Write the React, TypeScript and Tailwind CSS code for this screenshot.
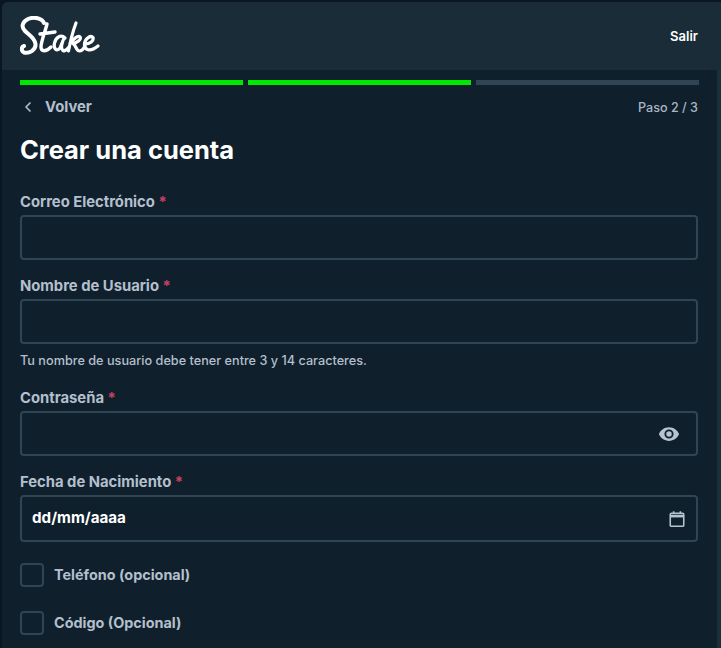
import React from 'react';
import { ChevronLeft } from 'lucide-react';

const font = { fontFamily: 'Inter' };

const StakeLogo = () => (
  <svg width="80" height="40" viewBox="0 0 80 40" fill="none" stroke="white" strokeLinecap="round" strokeLinejoin="round">
    {/* S */}
    <path d="M24 7 C22 2 14 0.5 8 3 C2 6 1 11 5 15 C9 19 15 22 15.500 28 C16 34 9 38 4 36.500 C1 35 1 31 4 30" strokeWidth="4" />
    {/* t */}
    <path d="M27 8 C25 16 21 26 21 31 C21 36 26 36 31 31 M20 18 L35 16" strokeWidth="3.400" />
    {/* a */}
    <path d="M45 22 C41 18 36 21 34.500 27 C33 33 37 36 40 32 L44 22 C42 27 41 31 42 33 C43 36 46 35 49 31" strokeWidth="3.200" />
    {/* k */}
    <path d="M56 7 C53 15 50 27 48.500 35 M50 28 C53 23 58 19 60 21 C62 23 57 27 53 27.500 C56 29 56 35 59.500 35 C62 35 64 32 65 30" strokeWidth="3.200" />
    {/* e */}
    <path d="M65 28 C70 28 74 25 73 21.500 C71 19 65 22 64.500 28 C64 34 70 36.500 78 30" strokeWidth="3.200" />
  </svg>
);

const Label = ({ text }: { text: string }) => (
  <label className="block pt-[1px] text-[14.8px] leading-[20px] font-bold text-[#b4bfcd]">
    {text} <span className="text-[#c9405f]">*</span>
  </label>
);

const Field = ({ children, tall }: { children?: React.ReactNode; tall?: boolean }) => (
  <div className={`mt-[3px] flex items-center border-2 border-[#2f4553] rounded-[4px] bg-[#0f202c] ${tall ? 'h-[47px]' : 'h-[45px]'}`}>
    {children}
  </div>
);

const Check = ({ text }: { text: string }) => (
  <div className="flex items-center gap-[10px] h-[24px]">
    <div className="w-[24px] h-[24px] border-2 border-[#2f4553] rounded-[4px] bg-[#0f202c]" />
    <span className="text-[14.4px] font-bold text-[#b4bfcd]">{text}</span>
  </div>
);

export default function App() {
  return (
    <div style={font} className="w-[721px] h-[648px] overflow-hidden bg-[#0a1720] pt-[2px] pl-[2px]">
      <div className="h-full bg-[#0f202c] rounded-tl-[6px] overflow-hidden">
        <header className="h-[68px] bg-[#1a2c38] flex items-center justify-between pl-[18px] pr-[23px]">
          <StakeLogo />
          <button className="mt-[1px] text-[13px] font-semibold text-white">Salir</button>
        </header>

        <div className="flex h-[578px]">
          <main className="flex-1 pl-[18px] pr-[19px]">
            <div className="flex gap-[5px] mt-[10px] mr-[-1px]">
              <div className="h-[5px] flex-1 bg-[#00e701]" />
              <div className="h-[5px] flex-1 bg-[#00e701]" />
              <div className="h-[5px] flex-1 bg-[#2f4553]" />
            </div>

            <div className="flex items-center justify-between mt-[12px] h-[20px]">
              <div className="flex items-center text-[#b4bfcd]">
                <ChevronLeft size={16} strokeWidth={2.5} />
                <span className="ml-[9px] text-[14.8px] font-bold">Volver</span>
              </div>
              <span className="mt-[3px] text-[12.6px] font-medium text-[#a9b5c4]">Paso 2 / 3</span>
            </div>

            <h1 className="mt-[17px] text-[25.500px] leading-[32px] font-bold text-white">Crear una cuenta</h1>

            <div className="mt-[25px]">
              <Label text="Correo Electrónico" />
              <Field />
            </div>

            <div className="mt-[15px]">
              <Label text="Nombre de Usuario" />
              <Field />
              <p className="mt-[9px] text-[12.7px] leading-[16px] font-medium text-[#b4bfcd]">
                Tu nombre de usuario debe tener entre 3 y 14 caracteres.
              </p>
            </div>

            <div className="mt-[18px]">
              <Label text="Contraseña" />
              <Field>
                <div className="ml-auto mr-[16px]">
                  <svg width="22" height="22" viewBox="0 0 24 24" fill="#b8c3d0">
                    <path fillRule="evenodd" d="M12 4.500C7 4.500 2.700 7.600 1 12c1.700 4.400 6 7.500 11 7.500s9.300-3.100 11-7.500c-1.700-4.400-6-7.500-11-7.500zm0 12.500a5 5 0 1 1 0-10 5 5 0 0 1 0 10zm0-8a3 3 0 1 0 0 6 3 3 0 0 0 0-6z" />
                  </svg>
                </div>
              </Field>
            </div>

            <div className="mt-[15px]">
              <Label text="Fecha de Nacimiento" />
              <Field tall>
                <span className="ml-[10px] mb-[1px] text-[15.2px] font-bold text-white">dd/mm/aaaa</span>
                <div className="ml-auto mr-[10px]">
                  <svg width="18" height="18" viewBox="0 0 16 16" fill="none" stroke="#b8c3d0" strokeWidth="1.400">
                    <rect x="2" y="3" width="12" height="11.500" rx="1" />
                    <path d="M2 5.500h12" strokeWidth="2.200" />
                    <path d="M5 1v2.500M11 1v2.500" />
                  </svg>
                </div>
              </Field>
            </div>

            <div className="mt-[21px] flex flex-col gap-[24px]">
              <Check text="Teléfono (opcional)" />
              <Check text="Código (Opcional)" />
            </div>
          </main>
          {/* scrollbar track */}
          <div className="w-[4px] bg-[#1a2f3c]" />
        </div>
      </div>
    </div>
  );
}
